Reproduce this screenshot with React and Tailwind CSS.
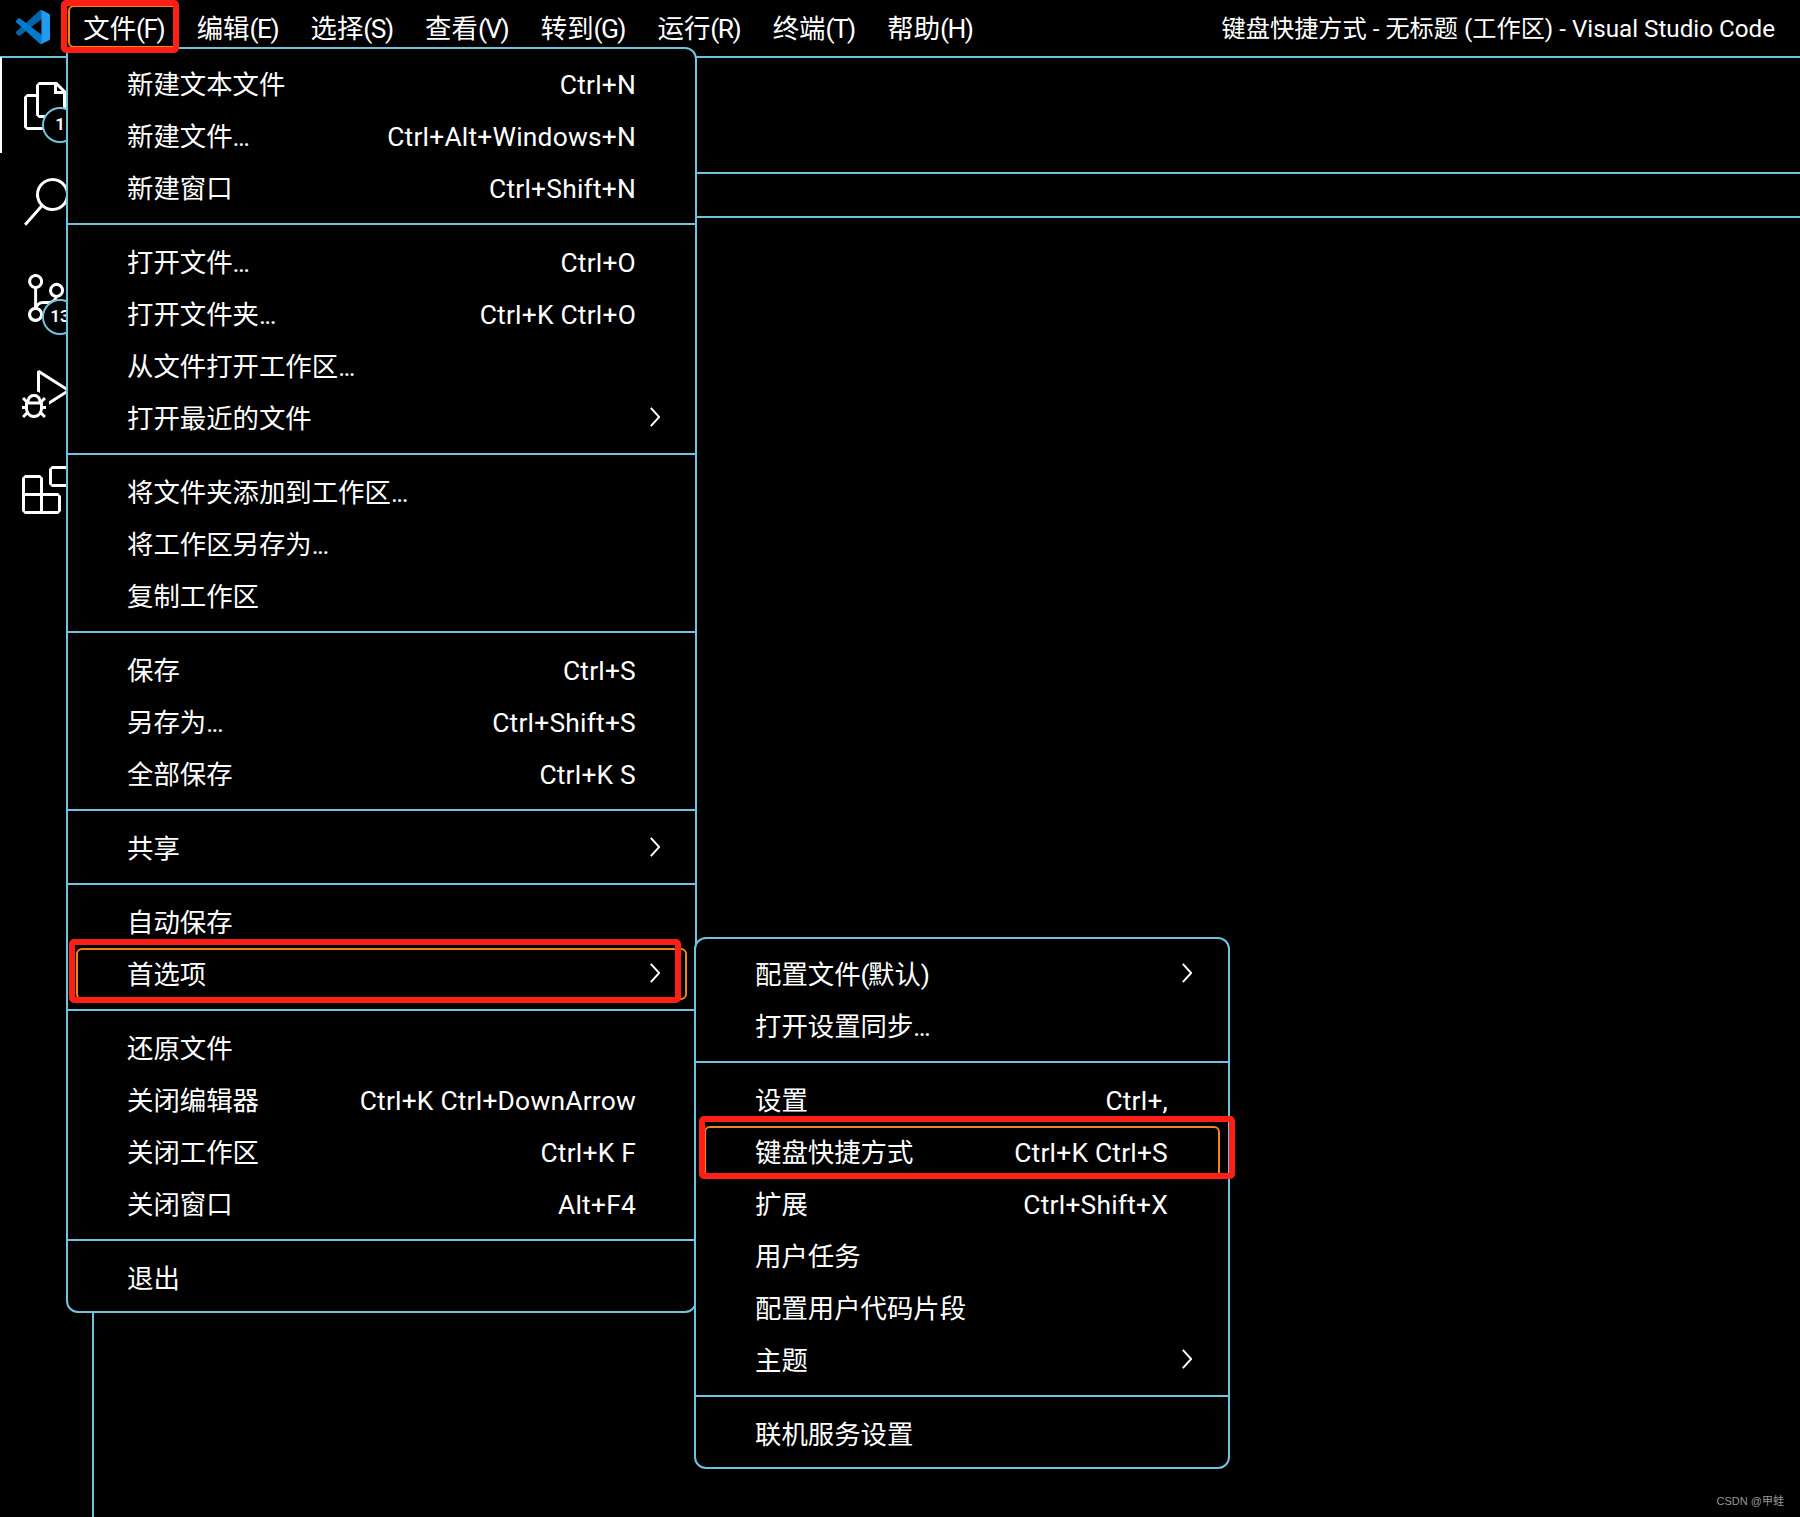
const FONT = "font-['Roboto','Noto_Sans_CJK_SC',sans-serif]";

const mainMenu = [
  [["新建文本文件", "Ctrl+N"], ["新建文件...", "Ctrl+Alt+Windows+N"], ["新建窗口", "Ctrl+Shift+N"]],
  [["打开文件...", "Ctrl+O"], ["打开文件夹...", "Ctrl+K Ctrl+O"], ["从文件打开工作区..."], ["打开最近的文件", null, true]],
  [["将文件夹添加到工作区..."], ["将工作区另存为..."], ["复制工作区"]],
  [["保存", "Ctrl+S"], ["另存为...", "Ctrl+Shift+S"], ["全部保存", "Ctrl+K S"]],
  [["共享", null, true]],
  [["自动保存"], ["首选项", null, true, true]],
  [["还原文件"], ["关闭编辑器", "Ctrl+K Ctrl+DownArrow"], ["关闭工作区", "Ctrl+K F"], ["关闭窗口", "Alt+F4"]],
  [["退出"]],
];

const subMenu = [
  [["配置文件(默认)", null, true], ["打开设置同步..."]],
  [["设置", "Ctrl+,"], ["键盘快捷方式", "Ctrl+K Ctrl+S", false, true], ["扩展", "Ctrl+Shift+X"], ["用户任务"], ["配置用户代码片段"], ["主题", null, true]],
  [["联机服务设置"]],
];

const topItems = ["文件(F)", "编辑(E)", "选择(S)", "查看(V)", "转到(G)", "运行(R)", "终端(T)", "帮助(H)"];

function Label({ text }) {
  return (
    <span>
      {text.split(/([\x00-\x7f]+)/).map((part, i) =>
        i % 2 === 1 ? <span key={i} className="tracking-[-0.06em]">{part}</span> : part
      )}
    </span>
  );
}

function Logo() {
  return (
    <svg viewBox="0 0 100 100" className="w-[34px] h-[34px]">
      <path fill="#0065A9" d="M96.4 10.8 75.8.9a6.2 6.2 0 0 0-7.1 1.2L1.3 63.6a4.2 4.2 0 0 0 0 6.1l5.5 5a4.2 4.2 0 0 0 5.3.2L93.2 13.5c2.7-2 6.6-.1 6.6 3.3v-.2a6.2 6.2 0 0 0-3.4-5.8z" />
      <path fill="#007ACC" d="M96.4 89.2 75.8 99.1a6.2 6.2 0 0 1-7.1-1.2L1.3 36.4a4.2 4.2 0 0 1 0-6.1l5.5-5a4.2 4.2 0 0 1 5.3-.2l81.1 61.4c2.7 2 6.6.1 6.6-3.3v.2a6.2 6.2 0 0 1-3.4 5.8z" />
      <path fill="#1F9CF0" d="M75.8 99.1a6.2 6.2 0 0 1-7.1-1.2c2.3 2.3 6.2.7 6.2-2.6V4.7c0-3.3-3.9-4.9-6.2-2.6a6.2 6.2 0 0 1 7.1-1.2l20.6 9.9a6.2 6.2 0 0 1 3.6 5.7v67c0 2.4-1.4 4.6-3.6 5.7z" />
    </svg>
  );
}

const icons = {
  files: "M17.5 0h-9L7 1.5V6H2.5L1 7.5v15.07L2.5 24h12.07L16 22.57V18h4.7l1.3-1.43V4.5L17.5 0zm0 2.12l2.38 2.38H17.5V2.12zm-3 20.38h-12v-15H7v9.07L8.5 18h6v4.5zm6-6h-12v-15H16V6h4.5v10.5z",
  search: "M15.25 0a8.25 8.25 0 0 0-6.18 13.72L1 22.88l1.12 1 8.05-9.12A8.251 8.251 0 1 0 15.25.01V0zm0 15a6.75 6.75 0 1 1 0-13.5 6.75 6.75 0 0 1 0 13.5z",
  scm: "M21.007 8.222A3.738 3.738 0 0 0 15.045 5.2a3.737 3.737 0 0 0 1.156 6.583 2.988 2.988 0 0 1-2.668 1.67h-2.99a4.456 4.456 0 0 0-2.989 1.165V7.4a3.737 3.737 0 1 0-1.494 0v9.117a3.776 3.776 0 1 0 1.816.099 2.99 2.99 0 0 1 2.668-1.667h2.99a4.484 4.484 0 0 0 4.223-3.039 3.736 3.736 0 0 0 3.25-3.687zM4.565 3.738a2.242 2.242 0 1 1 4.484 0 2.242 2.242 0 0 1-4.484 0zm4.484 16.441a2.242 2.242 0 1 1-4.484 0 2.242 2.242 0 0 1 4.484 0zm8.221-9.715a2.242 2.242 0 1 1 0-4.485 2.242 2.242 0 0 1 0 4.485z",
  debug: "M10.94 13.5l-1.32 1.32a3.73 3.73 0 0 0-7.24 0L1.06 13.5 0 14.56l1.72 1.72-.22.22V18H0v1.5h1.5v.08c.077.489.214.966.41 1.42L0 22.94 1.06 24l1.65-1.65A4.308 4.308 0 0 0 6 24a4.31 4.31 0 0 0 3.29-1.65L10.94 24 12 22.94 10.09 21c.198-.464.336-.951.41-1.45v-.05H12V18h-1.5v-1.5l-.22-.22L12 14.56l-1.06-1.06zM6 13.5a2.25 2.25 0 0 1 2.25 2.25h-4.5A2.25 2.25 0 0 1 6 13.5zm3 6a3.33 3.33 0 0 1-3 3 3.33 3.33 0 0 1-3-3v-2.25h6v2.25zm14.76-9.9v1.26L13.5 17.37v-1.77l8.5-5.37L9 2v9.46a5.07 5.07 0 0 0-1.5-.72V.63L8.64 0l15.12 9.6z",
  ext: "M13.5 1.5L15 0h7.5L24 1.5V9l-1.5 1.5H15L13.5 9V1.5zm1.5 0V9h7.5V1.5H15zM0 15V6l1.5-1.5H9L10.5 6v7.5H18l1.5 1.5v7.5L18 24H1.5L0 22.5V15zm9-1.5V6H1.5v7.5H9zM9 15H1.5v7.5H9V15zm1.5 7.5H18V15h-7.5v7.5z",
};

function ActivityItem({ d, badge, active }) {
  return (
    <div className="relative h-[96px] flex items-center pl-[22px]">
      {active && <div className="absolute left-0 -top-px w-[2px] h-[96px] bg-white" />}
      <svg viewBox="0 0 24 24" className="w-[48px] h-[48px]" fill="#fff"><path fillRule="evenodd" d={d} /></svg>
      {badge && (
        <div className="absolute left-[42px] top-[49px] min-w-[36px] h-[36px] rounded-full border-2 border-[#6fc3df] bg-black text-white text-[17px] font-semibold flex items-center justify-center">
          {badge}
        </div>
      )}
    </div>
  );
}

function Chevron() {
  return (
    <svg viewBox="0 0 10 20" className="w-[10px] h-[20px] -mt-[4px]" fill="none" stroke="#fff" strokeWidth="2">
      <path d="M.8 .8 9.2 10 .8 19.2" />
    </svg>
  );
}

function Row({ label, shortcut, arrow, focused, pr }) {
  return (
    <div className="relative h-[52px] flex items-center justify-between pl-[59px] pt-[2px]" style={{ paddingRight: arrow ? pr[1] : pr[0] }}>
      {focused && <div className="absolute left-[8px] right-[8px] top-0 bottom-0 rounded-[6px] border-2 border-[#f38518]" />}
      <Label text={label} />
      {shortcut && <span className="tracking-[0.008em]">{shortcut}</span>}
      {arrow && <Chevron />}
    </div>
  );
}

function Menu({ groups, className, pr }) {
  return (
    <div className={`absolute bg-black border-2 border-[#6fc3df] pt-[9px] pb-[7px] text-white text-[26.4px] leading-[52px] ${className}`}>
      {groups.map((g, i) => (
        <div key={i}>
          {i > 0 && <div className="mt-[9px] mb-[11px] h-[2px] bg-[#6fc3df]" />}
          {g.map(([l, s, a, f]) => (
            <Row key={l} label={l} shortcut={s} arrow={a} focused={f} pr={pr} />
          ))}
        </div>
      ))}
    </div>
  );
}

export default function App() {
  return (
    <div className={`relative w-[1800px] h-[1517px] bg-black overflow-hidden text-white ${FONT}`}>
      <div className="h-[58px] border-b-2 border-[#6fc3df] flex items-start">
        <div className="w-[67px] h-[56px] pl-[16px] pt-[10px]"><Logo /></div>
        {topItems.map((t, i) => (
          <div key={t} className="relative h-[56px] px-[16.3px] text-[26.4px] leading-[58px]">
            {i === 0 && <div className="absolute left-[1px] right-[1px] top-[5px] h-[43px] rounded-[6px] border-2 border-[#f38518]" />}
            <Label text={t} />
          </div>
        ))}
        <div className="ml-auto pr-[25px] text-[24.2px] leading-[58px]">键盘快捷方式 - 无标题 (工作区) - Visual Studio Code</div>
      </div>

      <div className="flex h-[1459px]">
        <div className="w-[94px] border-r-2 border-[#6fc3df] shrink-0">
          <ActivityItem d={icons.files} badge="1" active />
          <ActivityItem d={icons.search} />
          <ActivityItem d={icons.scm} badge="13" />
          <ActivityItem d={icons.debug} />
          <ActivityItem d={icons.ext} />
        </div>
        <div className="flex-1">
          <div className="h-[116px] border-b-2 border-[#6fc3df]" />
          <div className="h-[44px] border-b-2 border-[#6fc3df]" />
        </div>
      </div>

      <Menu groups={mainMenu} pr={[59, 35]} className="left-[66px] top-[47px] w-[631px] rounded-b-[12px] rounded-tr-[12px]" />
      <Menu groups={subMenu} pr={[60, 36]} className="left-[694px] top-[937px] w-[536px] rounded-[12px]" />

      <div className="absolute left-[61px] top-0 w-[118px] h-[53px] border-[6px] border-[#fc2014] rounded-[5px]" />
      <div className="absolute left-[69px] top-[939px] w-[612px] h-[64px] border-[6px] border-[#fc2014] rounded-[5px]" />
      <div className="absolute left-[699px] top-[1116px] w-[536px] h-[63px] border-[6px] border-[#fc2014] rounded-[5px]" />

      <div className="absolute right-[16px] top-[1493px] text-[11px] leading-[16px] text-[#999] font-['Liberation_Sans','Noto_Sans_CJK_SC',sans-serif]">CSDN @甲蛙</div>
    </div>
  );
}
